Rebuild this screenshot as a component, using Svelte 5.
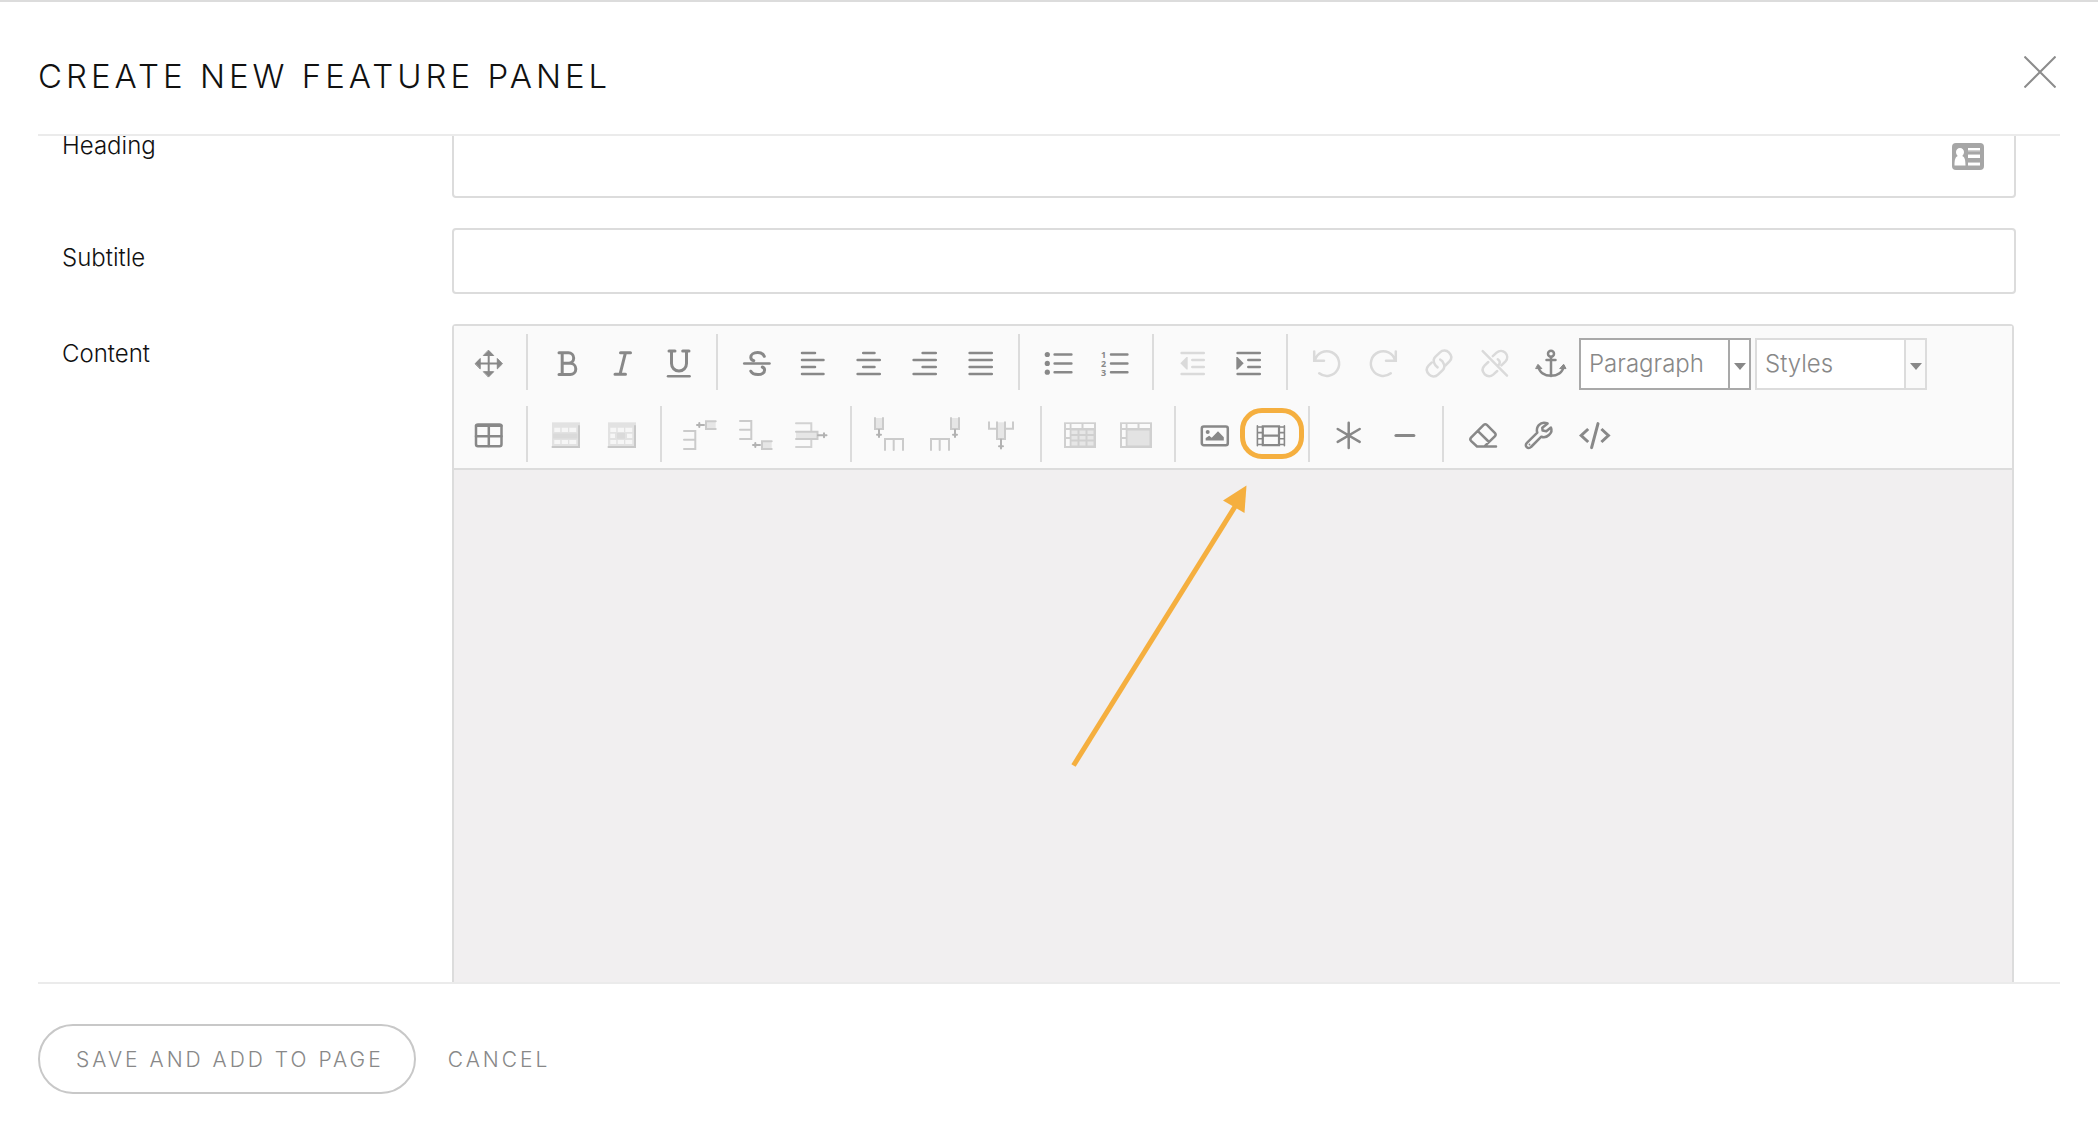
<script lang="ts">
    import { onMount } from "svelte";

    type Tool = { name: string, icon: string, off?: boolean };

    let body: HTMLElement;
    let heading = $state("");
    let subtitle = $state("");
    let format = $state("Paragraph");
    let style = $state("Styles");

    // the panel opens scrolled down to its first fields
    onMount(() => { body.scrollTop = 60; });

    const box = 'fill="#e6e6e6" stroke="#cbcbcb"';

    const rows: Tool[][][] = [
        [
            [
                { name: "Move", icon: '<path stroke-width="2" d="M15.7 6V27M5 16.5H27"/><path fill="currentColor" stroke-width="1" stroke-linejoin="round" d="M15.7 3.4L20.7 8.5H10.7ZM15.7 29.8L20.7 24.7H10.7ZM2.3 16.5L7.2 11.5V21.5ZM29.2 16.5L24.3 11.5V21.5Z"/>' },
            ],
            [
                { name: "Bold", icon: '<path stroke-width="3" d="M8 5.7H17.4a5.3 5.3 0 0 1 0 10.6H11H19.2a5.6 5.6 0 0 1 0 11.2H8M11.2 5.7V27.5"/>' },
                { name: "Italic", icon: '<path stroke-width="3" d="M13.5 5.7H23.5M8 27.3H18.5M18.5 5.7L13 27.3"/>' },
                { name: "Underline", icon: '<path stroke-width="3" d="M6 4H12M19.7 4H26M8.5 4V16.6a7.5 7.5 0 0 0 15 0V4"/><path d="M5 29.3H26.6"/>' },
            ],
            [
                { name: "Strikethrough", icon: '<path stroke-width="3" d="M23.3 9.3C22 6.5 19.5 5.5 16.7 5.5C12.5 5.5 9.8 7.6 9.8 10.3C9.8 12 10.8 13.2 12.8 13.7M21.3 20C23 20.7 23.6 21.7 23.6 23C23.6 25.8 20.9 27.6 17 27.6C13.5 27.6 10.8 26.4 9.8 24.2"/><path d="M3.2 16.6H28.5"/>' },
                { name: "Align left", icon: '<path d="M5 6H18M5 13H26.5M5 20H18M5 27H26.5"/>' },
                { name: "Align center", icon: '<path d="M10.2 6H21.5M4.6 13H26.8M10.2 20H21.5M4.6 27H26.8"/>' },
                { name: "Align right", icon: '<path d="M13.6 6H26.8M4.6 13H26.8M13.6 20H26.8M4.6 27H26.8"/>' },
                { name: "Justify", icon: '<path d="M4.6 6H26.8M4.6 13H26.8M4.6 20H26.8M4.6 27H26.8"/>' },
            ],
            [
                { name: "Bullet list", icon: '<path d="M11.6 7.5H28.4M11.6 16.5H28.4M11.6 25.2H28.4"/><g fill="currentColor" stroke="none"><circle cx="4.3" cy="7.5" r="2.6"/><circle cx="4.3" cy="16.4" r="2.6"/><circle cx="4.3" cy="25.2" r="2.6"/></g>' },
                { name: "Numbered list", icon: '<path d="M12 7.5H28.4M12 16.5H28.4M12 25.2H28.4"/><g fill="currentColor" stroke="none" font-family="Open Sans, sans-serif" font-weight="700" font-size="9"><text x="2" y="11">1</text><text x="2" y="20">2</text><text x="2" y="29">3</text></g>' },
            ],
            [
                { name: "Outdent", off: true, icon: '<path d="M4.6 6H26.8M15.3 13H26.8M15.3 20H26.8M4.6 27H26.8"/><path fill="currentColor" stroke="none" d="M10.7 10V22.6L9.5 22.6L3.3 16.3L9.5 10Z"/>' },
                { name: "Indent", icon: '<path d="M4.6 6H26.8M15.3 13H26.8M15.3 20H26.8M4.6 27H26.8"/><path fill="currentColor" stroke="none" d="M3.3 10V22.6L4.5 22.6L10.7 16.3L4.5 10Z"/>' },
            ],
            [
                { name: "Undo", off: true, icon: '<path d="M3.2 4.4V13.7H13M4 13.2A12.3 12.3 0 1 1 8.2 26.2"/>' },
                { name: "Redo", off: true, icon: '<path d="M28.8 4.4V13.7H19M28 13.2A12.3 12.3 0 1 0 23.8 26.2"/>' },
                { name: "Link", off: true, icon: '<path d="M11.5 16.7C9.9 13.5 10.6 11.6 12.3 9.9L17 5.4C19.8 2.7 23.6 3.2 25.8 5.4C28.8 8.4 29 11.7 26.5 14.3L22.3 18.5M11.5 16.7C12 18.4 13 19.4 14.6 20.4M20.5 16.3C22.1 19.5 21.4 21.4 19.7 23.1L15 27.6C12.2 30.3 8.4 29.8 6.2 27.6C3.2 24.6 3 21.3 5.5 18.7L8.6 15.6M20.5 16.3C20 14.6 19 13.4 17.2 12.6"/>' },
                { name: "Unlink", off: true, icon: '<path d="M3.7 4.2L28 28.6M13.8 9.2L17.6 5.7C20.2 3.3 23.8 3.4 26.2 5.7C28.6 8.1 29 11.6 26.5 14.3L22.4 18.3M19.2 18.6C21.5 15.8 21.2 14 18.8 12.3M9.3 15L5.5 18.7C3 21.3 3.2 24.6 5.6 27.2C8.3 29.6 11.6 29.8 14.2 27.6L18.2 24"/>' },
                { name: "Anchor", icon: '<circle cx="16" cy="6.8" r="3"/><path d="M16 10V29M11.5 13H20.5M3.3 19.5C4.5 25.5 9.5 28.8 16 28.8C22.5 28.8 27.5 25.5 28.7 19.5"/><path fill="currentColor" stroke-width="1" d="M3.2 17.6L6.9 21.6H1ZM28.8 17.6L31 21.6H25.1Z"/>' },
            ],
        ],
        [
            [
                { name: "Table", icon: '<rect x="3" y="5.6" width="25.5" height="21.7" rx="2"/><path d="M3 6.7H28.5M15.8 6.5V27M3 17.2H28.5"/>' },
            ],
            [
                { name: "Row properties", icon: '<path fill="#e2e2e2" stroke="none" d="M1 3.3H29V29H1Z"/><path stroke="#c8c8c8" stroke-width="2" d="M28 7V28H1.5"/><path fill="#f6f6f6" stroke="none" d="M3.3 8.7H9.3V13H3.3ZM10.7 8.7H17V13H10.7ZM18.3 8.7H25.3V13H18.3ZM3.3 21H9.3V25H3.3ZM10.7 21H17V25H10.7ZM18.3 21H25.3V25H18.3Z"/><path fill="#dadada" stroke="none" d="M2 14.5H26.5V19.5H2Z"/>' },
                { name: "Cell properties", icon: '<path fill="#e2e2e2" stroke="none" d="M1 3.3H29V29H1Z"/><path stroke="#c8c8c8" stroke-width="2" d="M28 7V28H1.5"/><path fill="#f6f6f6" stroke="none" d="M3.3 8.7H9.3V13H3.3ZM10.7 8.7H17V13H10.7ZM18.3 8.7H25.3V13H18.3ZM3.3 14.7H8V19H3.3ZM20 14.7H25.3V19H20ZM3.3 21H9.3V25H3.3ZM10.7 21H17V25H10.7ZM18.3 21H25.3V25H18.3Z"/><path fill="#dadada" stroke="none" d="M10 14H18V19.7H10Z"/>' },
            ],
            [
                { name: "Insert row before", icon: `<path stroke="#cbcbcb" stroke-width="2" d="M-1 12H10.3V30H-1M-1 20.7H10.3"/><path ${box} stroke-width="2" d="M30.7 2.2H21V10H30.7"/><path stroke="#b2b2b2" stroke-width="2" d="M12 6H19M14.3 4V8"/>` },
                { name: "Insert row after", icon: `<path stroke="#cbcbcb" stroke-width="2" d="M-1 2H10.3V20H-1M-1 10.7H10.3"/><path ${box} stroke-width="2" d="M30.7 22.2H21V30H30.7"/><path stroke="#b2b2b2" stroke-width="2" d="M12 26H19M14.3 24V28"/>` },
                { name: "Delete row", icon: `<path stroke="#d2d2d2" stroke-width="2" d="M-1 4.3H14.3V28H-1"/><path ${box} stroke-width="2" d="M-1 12.7H20.5V20H-1"/><path stroke="#b2b2b2" stroke-width="2" d="M21 16.2H29.5M27 14.2V18.2"/>` },
            ],
            [
                { name: "Insert column before", icon: `<path stroke="#cbcbcb" stroke-width="2" d="M10 31V20H28V31M18.7 20V31"/><path ${box} stroke-width="2" d="M0 -1V10H8V-1"/><path stroke="#b2b2b2" stroke-width="2" d="M4 11V18M2 15.7H6"/>` },
                { name: "Insert column after", icon: `<path stroke="#cbcbcb" stroke-width="2" d="M0 31V20H18V31M8.7 20V31"/><path ${box} stroke-width="2" d="M20 -1V10H28V-1"/><path stroke="#b2b2b2" stroke-width="2" d="M24 11V18M22 15.7H26"/>` },
                { name: "Delete column", icon: `<path stroke="#cbcbcb" stroke-width="2" d="M2 3.3V9.7H26V3.3"/><path ${box} stroke-width="2" d="M10 3.3V20H18V3.3"/><path stroke="#b2b2b2" stroke-width="2" d="M14 20.5V29.5M12 27.3H16"/>` },
            ],
            [
                { name: "Split cells", icon: '<path fill="#d0d0d0" stroke="none" d="M-1 3.3H31V29H-1Z"/><path fill="#fafafa" stroke="none" d="M1 5H4.7V9H1ZM6.5 5H16.5V9H6.5ZM18.5 5H29V9H18.5ZM1 11H4.7V18H1ZM1 20H4.7V27H1Z"/><path fill="#e6e6e6" stroke="none" d="M6.5 11.5H12.5V15H6.5ZM14.5 11.5H20.5V15H14.5ZM22.5 11.5H28.5V15H22.5ZM6.5 17H12.5V20.5H6.5ZM14.5 17H20.5V20.5H14.5ZM22.5 17H28.5V20.5H22.5ZM6.5 22.5H12.5V26.5H6.5ZM14.5 22.5H20.5V26.5H14.5ZM22.5 22.5H28.5V26.5H22.5Z"/>' },
                { name: "Merge cells", icon: '<path fill="#d0d0d0" stroke="none" d="M-1 3.3H31V29H-1Z"/><path fill="#fafafa" stroke="none" d="M1 5H4.7V9H1ZM6.5 5H16.5V9H6.5ZM18.5 5H29V9H18.5ZM1 11H4.7V18H1ZM1 20H4.7V27H1Z"/><path fill="#e3e3e3" stroke="none" d="M6.5 11.5H28.5V26.5H6.5Z"/>' },
            ],
            [
                { name: "Insert image", icon: '<rect x="2.8" y="7.4" width="26" height="18.8" rx="2"/><circle cx="8.7" cy="13" r="2" fill="currentColor" stroke="none"/><path fill="currentColor" stroke="none" d="M6.7 21.6V19L10.2 16.8L12.7 18.8L19 12.3L24.8 18.2V21.6Z"/>' },
                { name: "Insert media", icon: '<path stroke-width="2.2" d="M7.8 7.4H24V26.1H7.8ZM7.8 16.7H24"/><path stroke-width="1.6" d="M2.4 6.8V26.8M29.4 6.8V26.8M2.4 8H7M2.4 13.6H7M2.4 19.8H7M2.4 25.5H7M24.8 8H29.4M24.8 13.6H29.4M24.8 19.8H29.4M24.8 25.5H29.4"/>' },
            ],
            [
                { name: "Special character", icon: '<path d="M15.7 3.8V29M4.7 10L26.7 22.9M26.7 10L4.7 22.9"/>' },
                { name: "Horizontal line", icon: '<path stroke-width="3.2" d="M7 16.5H24.8"/>' },
            ],
            [
                { name: "Clear formatting", icon: '<path d="M29 27.4H10L4 21.8Q2.6 20.2 4 18.6L16.7 5.9Q18.3 4.5 19.9 5.9L28 14Q29.3 15.6 28 17.2L17.5 27.4M10.7 11.9L22 23"/>' },
                { name: "Tools", icon: '<path stroke-linejoin="round" d="M24.6 4.5C21.5 3.2 18 3.7 15.8 6.2C13.9 8.4 13.4 11 14.3 13.6L3.9 23.9C2.5 25.3 2.5 27.1 3.7 28.2C4.9 29.4 6.7 29.4 8 28L18.3 17.7C21 18.6 23.8 18 25.9 16C28.3 13.8 28.9 10.6 27.9 8.6L23.3 12.2L19.6 11.6L19.3 8.8Z"/><circle cx="6.5" cy="25.5" r=".9" fill="currentColor" stroke="none"/>' },
                { name: "Source code", icon: '<path stroke-linecap="butt" stroke-width="3" d="M9.2 10L2.2 16.5L9.2 23M22.4 10L29.4 16.5L22.4 23"/><path stroke-width="3" d="M19 4.6L12.6 28.6"/>' },
            ],
        ],
    ];
</script>

{#snippet list(label: string, options: string[], focused: boolean)}
    <div class={["list", { focused }]}>
        {#if focused}
            <select aria-label={label} bind:value={format}>
                {#each options as option}<option>{option}</option>{/each}
            </select>
        {:else}
            <select aria-label={label} bind:value={style}>
                {#each options as option}<option>{option}</option>{/each}
            </select>
        {/if}
        <span class="caret"></span>
    </div>
{/snippet}

<div class="dialog">
    <header>
        <h1>Create new feature panel</h1>
        <button class="close" aria-label="Close">
            <svg viewBox="0 0 32 32"><path d="M.5 .5L31.5 31.5M31.5 .5L.5 31.5" /></svg>
        </button>
    </header>

    <div class="body" bind:this={body}>
        <form>
            <label for="heading">Heading</label>
            <div class="field tall">
                <input id="heading" type="text" bind:value={heading} />
                <svg class="card" viewBox="0 0 32 28">
                    <rect width="32" height="27" rx="4" fill="#a6a6a6" />
                    <path
                        fill="#fff"
                        d="M8 5C10.400 5 12 6.800 12 9C12 10.800 11.200 12.200 10.200 13C12.600 14 13.500 16.500 13.500 22.500H2.500C2.500 16.500 3.400 14 5.800 13C4.800 12.200 4 10.800 4 9C4 6.800 5.600 5 8 5ZM16 5H28V7.500H16ZM16 12H28V15H16ZM16 20H28V22.500H16Z"
                    />
                    <path fill="#cdcdcd" d="M16 7.500H28V8.500H16ZM16 11H28V12H16ZM16 19H28V20H16Z" />
                </svg>
            </div>

            <label for="subtitle">Subtitle</label>
            <div class="field">
                <input id="subtitle" type="text" bind:value={subtitle} />
            </div>

            <label for="content">Content</label>
            <div class="editor">
                <div class="toolbar">
                    {#each rows as groups, index}
                        <div class="row">
                            {#each groups as group}
                                <div class="group">
                                    {#each group as tool}
                                        <button type="button" class={["tool", { off: tool.off }]} aria-label={tool.name}>
                                            <svg viewBox="0 0 32 32">{@html tool.icon}</svg>
                                            {#if tool.name == "Insert media"}
                                                <span class="ring"></span>
                                                <svg class="arrow" viewBox="0 0 180 290">
                                                    <path d="M3.500 283.500L166 23" />
                                                    <polygon points="176.500,3.500 153,18.500 174.500,31" />
                                                </svg>
                                            {/if}
                                        </button>
                                    {/each}
                                </div>
                            {/each}
                            {#if index == 0}
                                {@render list("Format", ["Paragraph", "Heading 1", "Heading 2"], true)}
                                {@render list("Styles", ["Styles"], false)}
                            {/if}
                        </div>
                    {/each}
                </div>
                <textarea id="content"></textarea>
            </div>
        </form>
    </div>

    <footer>
        <button class="save">Save and add to page</button>
        <button class="cancel">Cancel</button>
    </footer>
</div>

<style>
    :global(body) {
        margin: 0;
        background: #fff;
        font-family: Inter, "Open Sans", sans-serif;
        font-weight: 300;
    }

    * {
        box-sizing: border-box;
    }

    button, input, select, textarea {
        font: inherit;
        border: none;
        padding: 0;
        margin: 0;
        background: transparent;
        outline: none;
    }

    button {
        cursor: pointer;
    }

    .dialog {
        display: flex;
        flex-direction: column;
        height: 100vh;
        padding: 0 38px;
        border-top: 2px solid #dcdcdc;
    }

    header {
        display: flex;
        justify-content: space-between;
        align-items: flex-start;
        height: 134px;
        padding: 54px 4px 0 0;
        border-bottom: 2px solid #ebebeb;
        flex-shrink: 0;
    }

    h1 {
        margin: 0;
        font-size: 33px;
        line-height: 40px;
        font-weight: 300;
        letter-spacing: 4px;
        text-transform: uppercase;
        color: #111;
    }

    .close, .close svg {
        display: block;
        width: 32px;
        height: 32px;
    }

    .close path {
        stroke: #8c8c8c;
        stroke-width: 2;
    }

    .body {
        flex: 1;
        min-height: 0;
        overflow-y: auto;
        scrollbar-width: none;
    }

    form {
        display: grid;
        grid-template-columns: 390px 1fr;
        row-gap: 30px;
        padding: 40px 44px 40px 24px;
    }

    label {
        padding-top: 18px;
        font-size: 24px;
        line-height: 24px;
        color: #111;
    }

    .field {
        display: flex;
        align-items: center;
        height: 66px;
        padding: 0 30px 0 16px;
        border: 2px solid #dcdcdc;
        border-radius: 4px;
    }

    .field.tall {
        height: 82px;
    }

    .field input {
        flex: 1;
        font-size: 24px;
    }

    .card {
        width: 32px;
        height: 28px;
    }

    .editor {
        margin-right: 2px;
        border: 2px solid #dcdcdc;
        border-radius: 4px;
    }

    .toolbar {
        display: flex;
        flex-direction: column;
        gap: 16px;
        padding: 8px 7px 6px;
        background: #fafafa;
        border-bottom: 2px solid #dcdcdc;
    }

    .row, .group {
        display: flex;
    }

    .row {
        height: 56px;
    }

    .group + .group {
        margin-left: 9px;
        padding-left: 11px;
        border-left: 2px solid #dcdcdc;
    }

    .tool {
        position: relative;
        display: flex;
        align-items: center;
        justify-content: center;
        width: 56px;
        height: 56px;
        padding-top: 2px;
        color: #888;
    }

    .tool.off {
        color: #dadada;
    }

    .tool svg {
        width: 32px;
        height: 32px;
        overflow: visible;
        fill: none;
        stroke: currentColor;
        stroke-width: 2.5;
        stroke-linecap: round;
    }

    .ring {
        position: absolute;
        top: 2px;
        left: -3px;
        z-index: 1;
        width: 64px;
        height: 51px;
        border: 5px solid #f5af3f;
        border-radius: 22px;
    }

    .tool .arrow {
        position: absolute;
        top: 76px;
        left: -173px;
        z-index: 1;
        width: 180px;
        height: 290px;
        stroke: #f5af3f;
        stroke-width: 5;
        stroke-linecap: butt;
        pointer-events: none;
    }

    .arrow polygon {
        fill: #f5af3f;
        stroke: none;
    }

    .list {
        display: flex;
        align-self: flex-end;
        width: 172px;
        height: 52px;
        border: 2px solid #dcdcdc;
    }

    .list + .list {
        margin-left: 4px;
    }

    .list select {
        flex: 1;
        min-width: 0;
        padding: 0 0 2px 8px;
        appearance: none;
        background: #fff;
        font-size: 24px;
        color: #888;
    }

    .caret {
        display: flex;
        align-items: center;
        justify-content: center;
        width: 21px;
        padding-top: 4px;
        border-left: 2px solid #dcdcdc;
        pointer-events: none;
    }

    .caret::after {
        content: "";
        border: 6px solid transparent;
        border-top: 7px solid #888;
        border-bottom: none;
    }

    .focused, .focused .caret {
        border-color: #a9a9a9;
    }

    .focused .caret {
        background: #fff;
    }

    textarea {
        display: block;
        width: 100%;
        height: 640px;
        padding: 16px;
        resize: none;
        background: #f1eff0;
        font-size: 24px;
    }

    footer {
        display: flex;
        align-items: center;
        gap: 32px;
        height: 154px;
        padding-bottom: 2px;
        border-top: 2px solid #ebebeb;
        flex-shrink: 0;
    }

    footer button {
        font-size: 21px;
        letter-spacing: 3px;
        text-transform: uppercase;
        color: #888;
    }

    .save {
        height: 70px;
        padding: 0 30px 0 36px;
        border: 2px solid #c8c8c8;
        border-radius: 35px;
    }
</style>
